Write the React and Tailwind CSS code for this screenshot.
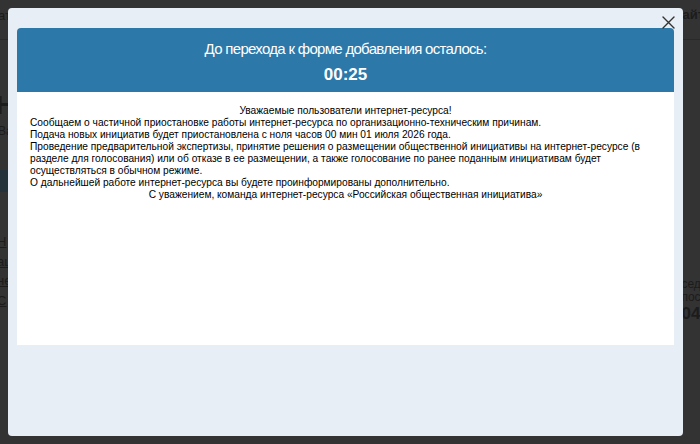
export default function App() {
  return (
    <div
      className="relative w-[700px] h-[444px] overflow-hidden bg-[#333333]"
      style={{ fontFamily: '"Liberation Sans", Arial, sans-serif' }}
    >
      {/* dimmed page underneath */}
      <div className="flex flex-col text-[#1c1c1c]">
        <div className="flex justify-between h-[40px] border-b border-[#2a2a2a] items-center">
          <span className="text-[13px] ml-[-2px] mt-[-8px]">ат</span>
          <span className="text-[13px] font-bold mr-[-4px] mt-[-10px]">айт</span>
        </div>
        <div className="flex justify-between">
          <div className="flex flex-col mt-[52px]">
            <span className="text-[26px] font-bold ml-[-4px] leading-none">Н</span>
            <span className="text-[12px] mt-[4px] ml-[-2px]">Ва</span>
            <div className="mt-[30px] w-[10px] h-[22px] bg-[#24303a]" />
            <span className="text-[13px] underline mt-[40px] ml-[-3px]">Н</span>
            <span className="text-[13px] underline ml-[-3px]">ац</span>
            <span className="text-[13px] underline ml-[-3px]">не</span>
            <span className="text-[13px] underline ml-[-3px]">С</span>
          </div>
          <div className="flex flex-col mt-[238px] mr-[-6px] text-[12px] leading-[13px]">
            <span>сед</span>
            <span>пос</span>
            <span className="text-[17px] font-bold leading-[20px]">04:</span>
          </div>
        </div>
      </div>

      {/* modal */}
      <div className="absolute left-[8px] top-[8px] w-[675px] h-[428px] rounded-[4px] bg-[#e7eef6] px-[9px] pt-[20px]">
        <button className="absolute right-[8px] top-[7px] w-[14px] h-[14px] flex items-center justify-center">
          <svg width="13" height="13" viewBox="0 0 13 13">
            <path d="M1 1 L12 12 M12 1 L1 12" stroke="#333" strokeWidth="1.4" strokeLinecap="round" />
          </svg>
        </button>
        <div className="flex flex-col">
          <div className="h-[64px] bg-[#2c78a9] rounded-t-[4px] flex flex-col items-center text-white">
            <div className="text-[15px] tracking-[-0.7px] mt-[12px] leading-[18px]">До перехода к форме добавления осталось:</div>
            <div className="text-[17px] font-bold mt-[7px] leading-[20px]">00:25</div>
          </div>
          <div className="h-[253px] bg-white px-[13px] pt-[13px] text-[10.2px] leading-[12px] text-black">
            <div className="text-center">Уважаемые пользователи интернет-ресурса!</div>
            <div>Сообщаем о частичной приостановке работы интернет-ресурса по организационно-техническим причинам.</div>
            <div>Подача новых инициатив будет приостановлена с ноля часов 00 мин 01 июля 2026 года.</div>
            <div>
              Проведение предварительной экспертизы, принятие решения о размещении общественной инициативы на интернет-ресурсе (в разделе для голосования) или об отказе в ее размещении, а также голосование по ранее поданным инициативам будет осуществляться в обычном режиме.
            </div>
            <div>О дальнейшей работе интернет-ресурса вы будете проинформированы дополнительно.</div>
            <div className="text-center">С уважением, команда интернет-ресурса «Российская общественная инициатива»</div>
          </div>
        </div>
      </div>
    </div>
  );
}
